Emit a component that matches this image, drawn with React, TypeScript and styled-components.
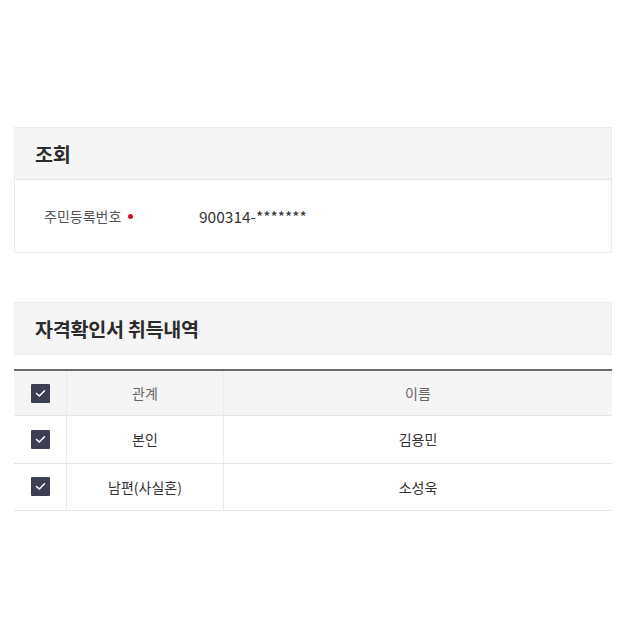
import React from "react";
import styled, { createGlobalStyle } from "styled-components";

const GlobalStyle = createGlobalStyle`
  *, *::before, *::after { box-sizing: border-box; }
  body {
    margin: 0;
    background: #ffffff;
    font-family: "Noto Sans CJK KR", "Noto Sans", sans-serif;
    color: #333;
  }
`;

const Page = styled.div`
  width: 612px;
  padding: 127px 0 0 14px;
`;

const Card = styled.section`
  border: 1px solid #ececec;
  background: #fff;
`;

const CardHeader = styled.div`
  height: 52px;
  display: flex;
  align-items: center;
  padding-left: 20px;
  background: #f5f5f5;
  border-bottom: 1px solid #e6e6e6;
`;

const Title = styled.h2`
  margin: 0;
  font-size: 19.6px;
  font-weight: 700;
  color: #2b2b2b;
  letter-spacing: -0.3px;
`;

const FieldRow = styled.div`
  height: 72px;
  display: flex;
  align-items: center;
  padding-left: 29px;
  font-size: 14px;
`;

const Label = styled.span`
  width: 155px;
  color: #555;
  display: flex;
  align-items: center;
  gap: 7px;
`;

const Required = styled.i`
  width: 5px;
  height: 5px;
  border-radius: 50%;
  background: #c8102e;
`;

const Value = styled.span`
  color: #333;
  font-size: 15.5px;
`;

const SectionTitle = styled.div`
  margin-top: 49px;
  border: 1px solid #ececec;
  background: #f5f5f5;
  height: 53px;
  display: flex;
  align-items: center;
  padding-left: 20px;
`;

const Table = styled.div`
  margin-top: 14px;
  border-top: 2px solid #6b6b6f;
  display: grid;
  grid-template-columns: 52px 157px 1fr;
  font-size: 14px;
`;

const Cell = styled.div<{ $head?: boolean; $first?: boolean }>`
  height: ${(p) => (p.$head ? 45 : 47.5)}px;
  display: flex;
  align-items: center;
  justify-content: center;
  background: ${(p) => (p.$head ? "#f5f5f5" : "#fff")};
  color: ${(p) => (p.$head ? "#666" : "#333")};
  border-bottom: 1px solid #e6e6e6;
  border-left: ${(p) => (p.$first ? "none" : "1px solid #ececec")};
`;

const Check = styled.span`
  width: 19px;
  height: 19px;
  background: #3c3f52;
  border-radius: 1px;
  display: flex;
  align-items: center;
  justify-content: center;
`;

const CheckBox = () => (
  <Check>
    <svg width="11" height="9" viewBox="0 0 11 9">
      <path d="M1.5 4.5 L4.3 7 L9.5 1.8" stroke="#fff" strokeWidth="1.6" fill="none" strokeLinecap="round" strokeLinejoin="round" />
    </svg>
  </Check>
);

const rows = [
  { rel: "본인", name: "김용민" },
  { rel: "남편(사실혼)", name: "소성욱" },
];

export default function App() {
  return (
    <Page>
      <GlobalStyle />
      <Card>
        <CardHeader>
          <Title>조회</Title>
        </CardHeader>
        <FieldRow>
          <Label>
            주민등록번호 <Required />
          </Label>
          <Value>900314-*******</Value>
        </FieldRow>
      </Card>

      <SectionTitle>
        <Title>자격확인서 취득내역</Title>
      </SectionTitle>

      <Table>
        <Cell $head $first>
          <CheckBox />
        </Cell>
        <Cell $head>관계</Cell>
        <Cell $head>이름</Cell>
        {rows.map((r) => (
          <React.Fragment key={r.name}>
            <Cell $first>
              <CheckBox />
            </Cell>
            <Cell>{r.rel}</Cell>
            <Cell>{r.name}</Cell>
          </React.Fragment>
        ))}
      </Table>
    </Page>
  );
}
